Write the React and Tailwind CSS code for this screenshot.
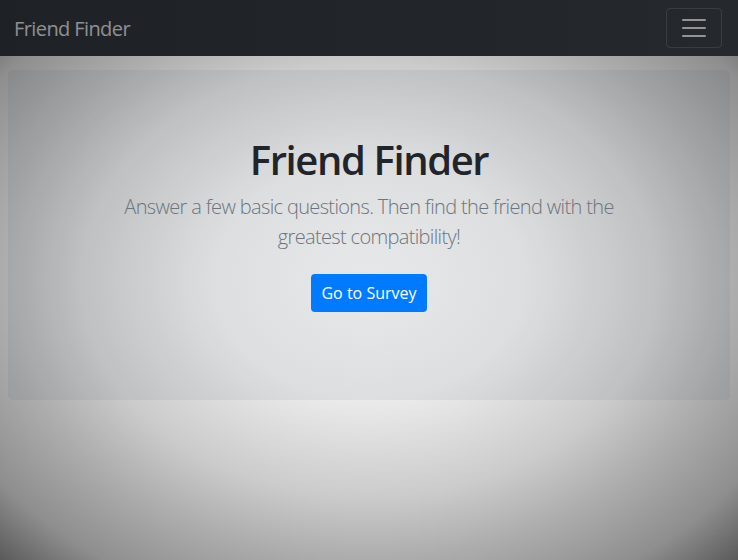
import React from 'react';

const App = () => {
    return (
        <div
            className="min-h-[560px] w-full bg-[radial-gradient(ellipse_at_center,#f6f6f6_0%,#ebebeb_30%,#cbcbcb_55%,#adadad_70%,#8e8e8e_87%,#5a5a5a_100%)]"
            style={{ fontFamily: '"Open Sans", "Noto Sans", sans-serif' }}
        >
            {/* Navbar */}
            <nav className="h-14 flex items-center justify-between pl-[14px] pr-4 bg-[linear-gradient(90deg,#1e2125,#25282c)]">
                <span className="pt-[2px] text-xl text-white/50 tracking-[-0.6px]">Friend Finder</span>
                <button className="w-14 h-10 flex items-center justify-center border border-white/10 rounded">
                    <svg width="30" height="30" viewBox="0 0 30 30">
                        <path d="M4 7h22M4 15h22M4 23h22" stroke="rgba(255,255,255,0.5)" strokeWidth="2" strokeLinecap="round" />
                    </svg>
                </button>
            </nav>

            {/* Jumbotron */}
            <div className="mx-2 mt-[14px] h-[330px] rounded-[5px] bg-[rgba(70,80,100,0.08)] pt-[66px] flex flex-col items-center text-center">
                <h1 className="text-[40px] leading-[48px] font-semibold text-[#212529] tracking-[-1.4px]">Friend Finder</h1>
                <p className="mt-2 text-xl leading-[30px] font-light text-[#6c757d] tracking-[-0.65px]">
                    Answer a few basic questions. Then find the friend with the
                    <br />
                    greatest compatibility!
                </p>
                <button className="mt-[22px] h-[38px] px-[10px] rounded bg-[#007bff] text-white text-base">
                    Go to Survey
                </button>
            </div>
        </div>
    );
};

export default App;
